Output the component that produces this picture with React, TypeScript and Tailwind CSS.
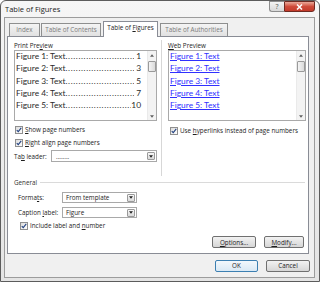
import React from "react";

function Check() {
  return (
    <span className="w-[8px] h-[8px] shrink-0 border border-[#8f8f8f] bg-linear-to-br from-[#dcdcdc] to-white flex items-center justify-center">
      <svg viewBox="0 0 8 8" className="w-[6px] h-[6px]">
        <path d="M1 4.2 L3 6.2 L7 1.2" stroke="#1f3f7f" strokeWidth="1.4" fill="none" />
      </svg>
    </span>
  );
}

function DropBtn() {
  return (
    <span className="w-[8px] h-[8px] mr-[1px] shrink-0 border border-[#9a9a9a] rounded-[1px] bg-linear-to-b from-[#f7f7f7] to-[#d9d9d9] flex items-center justify-center">
      <svg viewBox="0 0 5 3" className="w-[4px] h-[3px]">
        <path d="M0 0H5L2.5 3Z" fill="#222" />
      </svg>
    </span>
  );
}

function ScrollBar() {
  return (
    <div className="w-[9px] shrink-0 h-full bg-[#f3f3f3] border-l border-[#eaeaea] flex flex-col items-center">
      <div className="h-[8px] flex items-center justify-center">
        <svg viewBox="0 0 5 3" className="w-[4px] h-[3px]">
          <path d="M0 3H5L2.5 0Z" fill="#606060" />
        </svg>
      </div>
      <div className="w-[8px] h-[11px] mt-[2px] border border-[#9a9a9a] rounded-[1px] bg-linear-to-r from-[#f4f4f4] to-[#dadada]" />
      <div className="flex-1" />
      <div className="h-[8px] flex items-center justify-center">
        <svg viewBox="0 0 5 3" className="w-[4px] h-[3px]">
          <path d="M0 0H5L2.5 3Z" fill="#606060" />
        </svg>
      </div>
    </div>
  );
}

const printRows = [
  ["Figure 1: Text", " 1"],
  ["Figure 2: Text", " 3"],
  ["Figure 3: Text", " 5"],
  ["Figure 4: Text", " 7"],
  ["Figure 5: Text", "10"],
];

const dots = "..................................................";

export default function App() {
  return (
    <div className="w-[320px] h-[282px] overflow-hidden bg-white">
      <div className="w-[320px] h-[282px] rounded-t-[6px] border border-[#5c5c5c] bg-linear-to-b from-[#f6f6f6] to-[#e4e4e4] flex flex-col font-['Segoe_UI','Open_Sans','Noto_Sans',sans-serif] text-[#1e1e1e]">
        {/* Title bar */}
        <div className="h-[16px] flex items-start justify-between">
          <span className="pl-[4px] pt-[3px] text-[7.5px] leading-[10px] text-[#222]">Table of Figures</span>
          <div className="flex mr-[4px]">
            <div className="w-[15px] h-[11px] border border-[#8d8d8d] border-r-0 rounded-bl-[3px] bg-linear-to-b from-[#f4f4f4] to-[#d8d8d8] flex items-center justify-center text-[7px] leading-none text-[#555]">
              ?
            </div>
            <div className="w-[31px] h-[11px] border border-[#6f2a22] rounded-br-[3px] bg-linear-to-b from-[#e9a89a] via-[#cf4b3b] to-[#c23a2a] flex items-center justify-center">
              <svg viewBox="0 0 7 6" className="w-[7px] h-[6px]">
                <path d="M1 0.5 L6 5.5 M6 0.5 L1 5.5" stroke="white" strokeWidth="1.5" />
              </svg>
            </div>
          </div>
        </div>

        {/* Client area */}
        <div className="ml-[3px] mr-[4px] mb-[3px] flex-1 border border-[#9c9c9c] bg-[#f0f0f0] flex flex-col">
          {/* Tabs */}
          <div className="h-[19px] -mb-[1px] relative z-10 flex items-end pl-[4px] text-[6.3px] leading-none">
            <div className="w-[31px] h-[13px] mb-[1px] border border-b-0 border-[#8e8f8f] bg-linear-to-b from-[#f4f4f4] to-[#e1e1e1] flex items-center justify-center text-[#7c7c7c]">
              Index
            </div>
            <div className="w-[60px] h-[13px] mb-[1px] ml-[1px] border border-b-0 border-[#8e8f8f] bg-linear-to-b from-[#f4f4f4] to-[#e1e1e1] flex items-center justify-center text-[#7c7c7c]">
              Table of Contents
            </div>
            <div className="w-[55px] h-[16px] ml-[2px] border border-b-0 border-[#898c95] bg-white flex items-start pt-[3px] justify-center text-[#1e1e1e]">
              <span>
                Table of <span className="underline">F</span>igures
              </span>
            </div>
            <div className="w-[68px] h-[13px] mb-[1px] ml-[2px] border border-b-0 border-[#8e8f8f] bg-linear-to-b from-[#f4f4f4] to-[#e1e1e1] flex items-center justify-center text-[#7c7c7c]">
              Table of Authorities
            </div>
          </div>

          {/* Panel */}
          <div className="ml-[2px] mr-[5px] h-[218px] border border-[#898c95] bg-white flex flex-col text-[6.3px] leading-[9px]">
            {/* previews */}
            <div className="h-[139px] flex pl-[6px] pt-[4px]">
              <div className="w-[143px] flex flex-col">
                <span className="h-[9px] text-[#1e1e1e]">
                  Print Pre<span className="underline">v</span>iew
                </span>
                <div className="h-[71px] border border-[#a9a9a9] flex">
                  <div className="flex-1 min-w-0 overflow-hidden -mt-[1px] pl-[1px] pr-[6px] font-['Lato','Carlito',sans-serif] text-[8.4px] leading-[12.25px] text-[#2b2b2b]">
                    {printRows.map(([t, n]) => (
                      <div key={t} className="flex whitespace-pre">
                        <span className="shrink-0">{t}</span>
                        <span className="flex-1 min-w-0 overflow-hidden tracking-[0.6px]">{dots}</span>
                        <span className="shrink-0">{n}</span>
                      </div>
                    ))}
                  </div>
                  <ScrollBar />
                </div>
                <div className="mt-[4px] h-[9px] flex items-center gap-[2px] pl-[1px]">
                  <Check />
                  <span>
                    <span className="underline">S</span>how page numbers
                  </span>
                </div>
                <div className="mt-[4px] h-[9px] flex items-center gap-[2px] pl-[1px]">
                  <Check />
                  <span>
                    <span className="underline">R</span>ight align page numbers
                  </span>
                </div>
                <div className="mt-[3px] flex items-center">
                  <span className="w-[37px]">
                    Ta<span className="underline">b</span> leader:
                  </span>
                  <div className="flex-1 h-[12px] border border-[#a9a9a9] bg-white flex items-center">
                    <span className="flex-1 pl-[4px] text-[#333]">........</span>
                    <DropBtn />
                  </div>
                </div>
              </div>
              <div className="w-[1px] ml-[4px] mr-[6px] bg-[#d7d7d7] -mt-[1px]" />
              <div className="w-[138px] flex flex-col">
                <span className="h-[9px] text-[#1e1e1e]">
                  <span className="underline">W</span>eb Preview
                </span>
                <div className="h-[71px] border border-[#a9a9a9] flex">
                  <div className="flex-1 min-w-0 -mt-[1px] pl-[1px] font-['Lato','Carlito',sans-serif] text-[8.4px] leading-[12.25px] text-[#3030ff]">
                    {printRows.map(([t]) => (
                      <div key={t}>
                        <span className="underline">{t}</span>
                      </div>
                    ))}
                  </div>
                  <ScrollBar />
                </div>
                <div className="mt-[5px] h-[9px] flex items-center gap-[2px] pl-[2px] whitespace-nowrap">
                  <Check />
                  <span>
                    Use <span className="underline">h</span>yperlinks instead of page numbers
                  </span>
                </div>
              </div>
            </div>

            {/* General */}
            <div className="flex flex-col flex-1 pl-[6px] pr-[3px]">
              <div className="mt-[1px] h-[10px] flex items-center gap-[3px]">
                <span className="text-[#333]">General</span>
                <div className="flex-1 h-[1px] bg-[#dadada]" />
              </div>
              <div className="pl-[4px] flex flex-col">
                <div className="mt-[5px] flex items-center">
                  <span className="w-[44px] whitespace-nowrap">
                    Forma<span className="underline">t</span>s:
                  </span>
                  <div className="w-[75px] h-[11px] border border-[#a9a9a9] bg-white flex items-center">
                    <span className="flex-1 pl-[3px]">From template</span>
                    <DropBtn />
                  </div>
                </div>
                <div className="mt-[4px] flex items-center">
                  <span className="w-[44px] whitespace-nowrap">
                    Caption <span className="underline">l</span>abel:
                  </span>
                  <div className="w-[75px] h-[11px] border border-[#a9a9a9] bg-white flex items-center">
                    <span className="flex-1 pl-[3px]">Figure</span>
                    <DropBtn />
                  </div>
                </div>
                <div className="mt-[3px] h-[9px] flex items-center gap-[2px] pl-[2px]">
                  <Check />
                  <span>
                    Include label and <span className="underline">n</span>umber
                  </span>
                </div>
              </div>
              <div className="mt-[6px] flex justify-end gap-[8px] pr-[1px]">
                <div className="w-[44px] h-[12px] border border-[#707070] rounded-[2px] bg-linear-to-b from-[#f2f2f2] to-[#d6d6d6] flex items-center justify-center">
                  <span>
                    <span className="underline">O</span>ptions...
                  </span>
                </div>
                <div className="w-[40px] h-[12px] border border-[#707070] rounded-[2px] bg-linear-to-b from-[#f2f2f2] to-[#d6d6d6] flex items-center justify-center">
                  <span>
                    <span className="underline">M</span>odify...
                  </span>
                </div>
              </div>
            </div>
          </div>

          {/* Bottom buttons */}
          <div className="flex-1 flex items-start justify-end pt-[6px] pr-[4px] gap-[8px] text-[6.3px] leading-none">
            <div className="w-[43px] h-[12px] border border-[#3c7fb1] rounded-[2px] bg-linear-to-b from-[#f2f8fc] to-[#d9e9f5] flex items-center justify-center">
              OK
            </div>
            <div className="w-[44px] h-[12px] border border-[#707070] rounded-[2px] bg-linear-to-b from-[#f2f2f2] to-[#d6d6d6] flex items-center justify-center">
              Cancel
            </div>
          </div>
        </div>
      </div>
    </div>
  );
}
